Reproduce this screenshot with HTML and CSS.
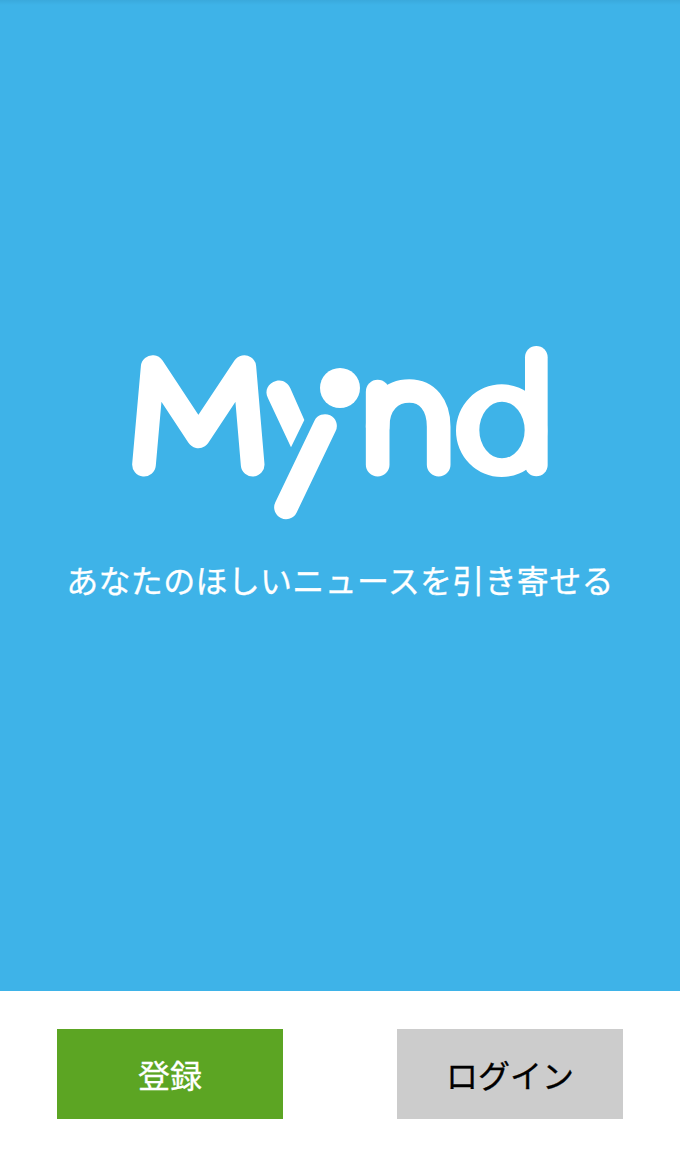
FILE: index.html
```html
<!DOCTYPE html>
<html lang="ja">
<head>
    <meta charset="UTF-8">
    <meta name="viewport" content="width=device-width, initial-scale=1.0">
    <title>Mynd</title>
    <link rel="stylesheet" href="styles.css">
</head>
<body>
    <div class="hero">
        <svg class="logo" viewBox="0 0 1320 585" role="img" aria-label="Mynd">
            <!-- M -->
            <path class="stroke" d="M72 389 L98 96 L235 304 L373 96 L398 389"/>
            <!-- y -->
            <path class="fill" d="M444 190 C432 165 445 145 468 138 C488 133 503 143 511 160 L553 255 L513 337 Z"/>
            <path class="stroke" d="M615 273 L498 517"/>
            <circle class="fill" cx="660" cy="159" r="60"/>
            <!-- n -->
            <path class="stroke" d="M773 389 V170"/>
            <path class="stroke" d="M773 275 C773 205 815 168 868 168 C922 168 956 210 956 275 V389"/>
            <!-- d -->
            <path class="fill" fill-rule="evenodd" d="M1008 287 A137 139 0 1 1 1282 287 A137 139 0 1 1 1008 287 Z M1078 285 A68 85 0 1 0 1214 285 A68 85 0 1 0 1078 285 Z"/>
            <path class="stroke stem" d="M1249 67 V390"/>
        </svg>
        <p class="tagline">あなたのほしいニュースを引き寄せる</p>
    </div>

    <div class="actions">
        <button class="btn btn-register">登録</button>
        <button class="btn btn-login">ログイン</button>
    </div>
</body>
</html>
```

FILE: styles.css
```css
* {
    margin: 0;
    padding: 0;
    box-sizing: border-box;
}

body {
    height: 100vh;
    display: flex;
    flex-direction: column;
    background: #fff;
    font-family: "Noto Sans CJK JP", "Noto Sans", sans-serif;
    overflow: hidden;
}

.hero {
    height: 991px;
    padding-top: 335px;
    display: flex;
    flex-direction: column;
    align-items: center;
    background: linear-gradient(#3aa9dc 0, #3eb3e8 5px);
}

.logo {
    display: block;
    width: 440px;
    height: 195px;
}

.logo .fill {
    fill: #fff;
}

.logo .stroke {
    fill: none;
    stroke: #fff;
    stroke-width: 71;
    stroke-linecap: round;
    stroke-linejoin: round;
}

.logo .stem {
    stroke-width: 68;
}

.tagline {
    margin-top: 25px;
    font-size: 32px;
    letter-spacing: 0.3px;
    line-height: 48px;
    color: #fff;
    -webkit-text-stroke: 0.3px #fff;
    white-space: nowrap;
}

.actions {
    flex: 1;
    display: flex;
    justify-content: space-between;
    align-items: flex-start;
    padding: 38px 57px 0;
}

.btn {
    width: 226px;
    height: 90px;
    border: none;
    font-family: inherit;
    font-size: 32px;
    -webkit-text-stroke: 0.3px currentColor;
}

.btn-register {
    background: #5ca523;
    color: #fff;
}

.btn-login {
    background: #ccc;
    color: #000;
}
```
